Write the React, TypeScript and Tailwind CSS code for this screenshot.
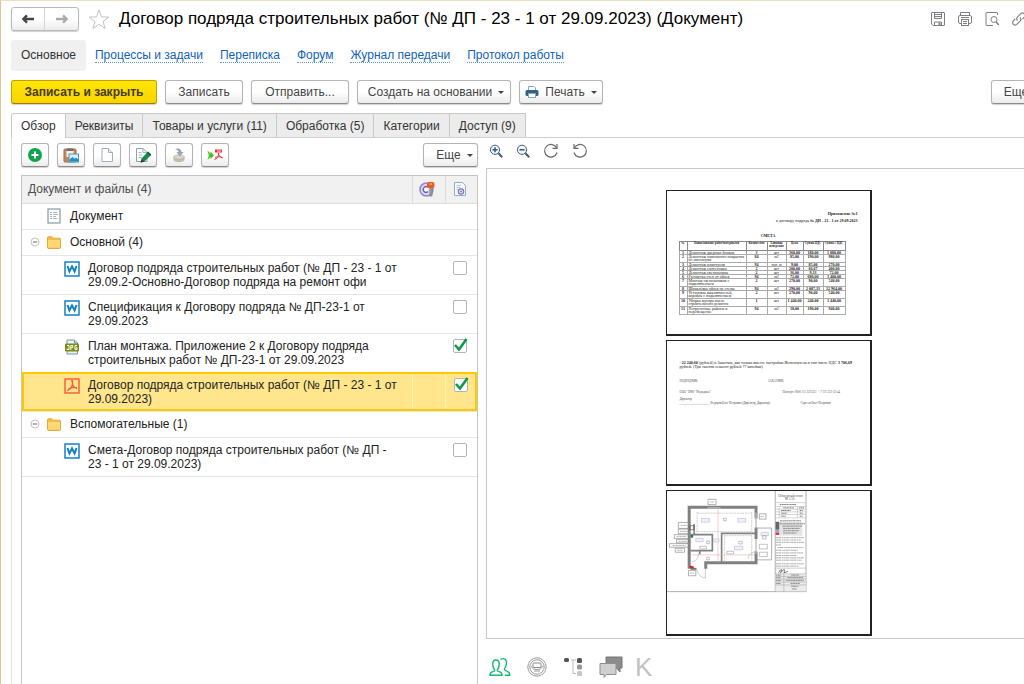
import type { ReactNode } from "react";
import clsx from "clsx";

const NAV_LINKS = ["Процессы и задачи", "Переписка", "Форум", "Журнал передачи", "Протокол работы"];

const TABS = ["Обзор", "Реквизиты", "Товары и услуги (11)", "Обработка (5)", "Категории", "Доступ (9)"];

type FileRow = {
  icon: "word" | "jpg" | "pdf";
  lines: [string, string];
  checked?: boolean;
  selected?: boolean;
};

const MAIN_FILES: FileRow[] = [
  {
    icon: "word",
    lines: ["Договор подряда строительных работ (№ ДП - 23 - 1 от", "29.09.2-Основно-Договор подряда на ремонт офи"],
  },
  { icon: "word", lines: ["Спецификация к Договору подряда № ДП-23-1 от", "29.09.2023"] },
  {
    icon: "jpg",
    lines: ["План монтажа. Приложение 2 к Договору подряда", "строительных работ № ДП-23-1 от 29.09.2023"],
    checked: true,
  },
  {
    icon: "pdf",
    lines: ["Договор подряда строительных работ (№ ДП - 23 - 1 от", "29.09.2023)"],
    checked: true,
    selected: true,
  },
];

const EXTRA_FILES: FileRow[] = [
  { icon: "word", lines: ["Смета-Договор подряда строительных работ (№ ДП -", "23 - 1 от 29.09.2023)"] },
];

type EstimateRow = { cells: string[]; tall?: boolean };

const ESTIMATE: EstimateRow[] = [
  { cells: ["1", "Демонтаж дверных блоков", "3", "шт", "360,00", "180,00", "1 080,00"] },
  { cells: ["2", "Демонтаж напольного покрытия из линолеума", "84", "м2", "85,00", "190,00", "980,00"], tall: true },
  { cells: ["3", "Демонтаж плинтусов", "94", "пог. м", "9,00", "85,00", "270,00"] },
  { cells: ["4", "Демонтаж сантехники", "2", "шт", "200,00", "66,67", "400,00"] },
  { cells: ["5", "Демонтаж светильника", "2", "шт", "36,00", "9,33", "72,00"] },
  { cells: ["6", "Расчистка стен от обоев", "94", "м2", "72,00", "680,00", "3 400,00"] },
  { cells: ["7", "Монтаж светильников с подключением", "2", "шт", "270,00", "90,00", "540,00"], tall: true },
  { cells: ["8", "Шпаклёвка обоев на стены", "94", "м2", "290,00", "2 087,33", "12 964,00"] },
  { cells: ["9", "Установка выключателей, коробок с подключением", "2", "шт", "270,00", "90,00", "540,00"], tall: true },
  { cells: ["10", "Уборка мусора после строительного ремонта", "1", "шт", "1 440,00", "240,00", "1 440,00"], tall: true },
  { cells: ["11", "Погрузочные работы и перемещение", "94", "м2", "18,00", "190,00", "940,00"], tall: true },
];

/* ---------- icons ---------- */

function ArrowIcon({ className }: { className?: string }) {
  return (
    <svg viewBox="0 0 14 10" className={clsx("h-[10px] w-[14px]", className)} fill="none" stroke="currentColor" strokeWidth="2.400">
      <path d="M13 5H3" />
      <path d="M6 1.400L2.400 5 6 8.600" />
    </svg>
  );
}

function WordIcon() {
  return (
    <svg viewBox="0 0 16 16" className="size-4">
      <rect x="1" y="1" width="14" height="14" fill="#fff" stroke="#1480c4" strokeWidth="1.500" />
      <path d="M3.500 5l1.900 5.500L8 5.500l2.600 5L12.500 5" fill="none" stroke="#1480c4" strokeWidth="2" />
    </svg>
  );
}

function PdfIcon() {
  return (
    <svg viewBox="0 0 16 16" className="size-4" fill="none" stroke="#f4593b">
      <rect x="1" y="1" width="14" height="14" strokeWidth="1.400" />
      <path d="M7 3h1.500v3.500c.5 2 2.200 3.500 4.500 4M8.500 6C8 9 6 11.500 3.200 12.800M4.200 11.300C6 9.800 9.500 9 12.800 9.700" strokeWidth="1.300" />
    </svg>
  );
}

function JpgIcon() {
  return (
    <svg viewBox="0 0 16 16" className="size-4">
      <path d="M3 1h7.500L13.500 4v11H3z" fill="#eaf1f4" stroke="#7795a5" />
      <path d="M10.500 1v3h3" fill="#c6d6de" stroke="#7795a5" />
      <rect x="1" y="4.500" width="14" height="8" rx="1" fill="#7d8c14" />
      <path d="M3 9.500v1h2V6.500H3M6.800 11V6.500h2v2.200h-2M13 6.500h-2v4h2V8.700h-1" fill="none" stroke="#fff" strokeWidth="1" />
    </svg>
  );
}

function FolderIcon() {
  return (
    <svg viewBox="0 0 14 13" className="h-[13px] w-[14px]">
      <path d="M.5 2c0-.8.300-1.200 1-1.200h3.500l1.300 1.400h6.200c.7 0 1 .4 1 1v8.300c0 .6-.4 1-1 1h-11c-.6 0-1-.4-1-1z" fill="#f3bd4c" stroke="#e5a93a" />
      <path d="M1 4h12v7.600H1z" fill="#ffd875" />
    </svg>
  );
}

function DocumentIcon() {
  return (
    <svg viewBox="0 0 14 16" className="h-4 w-[14px]" fill="none" stroke="#8fa1ac">
      <rect x="1" y="1" width="12" height="14" fill="#fff" strokeWidth="1.300" />
      <path d="M3 4.500h2M6 4.500h4M3 6.500h2M6 6.500h5M3 8.500h2M6 8.500h3M3 10.500h2M6 10.500h4" stroke="#a9b7c0" />
    </svg>
  );
}

function CollapseIcon() {
  return (
    <svg viewBox="0 0 10 10" className="size-[10px]" fill="none">
      <circle cx="5" cy="5" r="4" stroke="#c2c2c2" />
      <path d="M2.800 5h4.400" stroke="#666" />
    </svg>
  );
}

function AddIcon() {
  return (
    <svg viewBox="0 0 16 16" className="size-4">
      <circle cx="8" cy="8" r="7" fill="#10a54a" />
      <path d="M8 4.500v7M4.500 8h7" stroke="#fff" strokeWidth="2" />
    </svg>
  );
}

function PasteIcon() {
  return (
    <svg viewBox="0 0 16 16" className="size-4">
      <rect x="1" y="2" width="12" height="13" rx="1" fill="#c08a5f" stroke="#a26b42" />
      <rect x="3.500" y="4" width="7" height="6" fill="#f6efe8" />
      <path d="M4 1.500h6v2.500H4z" fill="#6d6d6d" />
      <rect x="6" y="7" width="9.500" height="8" fill="#d8effc" stroke="#4e93bd" />
      <path d="M6.500 14.500v-2l3-2.500 2 1.800 1.500-1 2.500 2v1.700z" fill="#1a8cc7" />
    </svg>
  );
}

function BlankPageIcon() {
  return (
    <svg viewBox="0 0 16 16" className="size-4" fill="#fff" stroke="#9fb0ba">
      <path d="M3 1.500h6.500L13.500 5.500v9H3z" />
      <path d="M9.500 1.500v4h4" fill="#e6edf1" />
    </svg>
  );
}

function EditPageIcon() {
  return (
    <svg viewBox="0 0 16 16" className="size-4">
      <path d="M1.500 1.500h6.500l4 4v9H1.500z" fill="#fff" stroke="#8a9fab" />
      <path d="M8 1.500v4h4M3.500 5.500h3M3.500 8h4M3.500 10.500h3" fill="none" stroke="#9fb5c1" />
      <path d="M6.500 11.500L12.500 5l3.300 3.200-6.300 6.300-3.800 1z" fill="#198a4b" />
      <path d="M12.500 5l3.300 3.200" stroke="#0d5233" strokeWidth="1.500" />
      <path d="M6.500 12.500l2.700 2.300-3.500.8z" fill="#333" />
    </svg>
  );
}

function StoreIcon() {
  return (
    <svg viewBox="0 0 16 16" className="size-4">
      <path d="M2.500 10v2.500c0 3.500 11 3.500 11 0V10z" fill="#c1bcac" />
      <ellipse cx="8" cy="10" rx="5.500" ry="2.200" fill="#d9d5c8" stroke="#b3ae9d" strokeWidth=".6" />
      <path d="M4 2.500C7 .5 10.500 1.500 10.500 5h2L8.800 9.500 5.500 5h2C7.500 3.500 6 2.500 4 2.500z" fill="#98a6b3" />
    </svg>
  );
}

function ToPdfIcon() {
  return (
    <svg viewBox="0 0 16 16" className="size-4">
      <path d="M.5 3.500l3 3V4.500l3.500 4-3.500 3.500V10l-3 3 1.300-4.500z" fill="#4fbf1f" />
      <path d="M8 2.500h7v3H8z" fill="#ee3338" />
      <path d="M10 4h4" stroke="#fff" strokeWidth=".8" />
      <path d="M11.300 6c.5 2.500 2 4.500 4.200 5M11.800 6.500c-.3 3-1.800 5.500-4.300 6M8 11c2-1.500 5-1.700 7.500-.5" fill="none" stroke="#ee3338" />
    </svg>
  );
}

function PrinterColorIcon() {
  return (
    <svg viewBox="0 0 14 14" className="size-[14px]">
      <path d="M3.500 1.500h5.500l1.500 1.500v3h-7z" fill="#fff" stroke="#8aa5b5" />
      <rect x=".5" y="5" width="13" height="6" rx="1.500" fill="#2f6488" />
      <rect x="3.500" y="8.500" width="7" height="4" fill="#fff" stroke="#8aa5b5" />
    </svg>
  );
}

function SaveIcon() {
  return (
    <svg viewBox="0 0 16 16" className="size-4" fill="none" stroke="#808080">
      <path d="M2 1.500h12q.5 0 .5.500v12q0 .5-.5.500H3L1.500 13V2q0-.5.5-.5z" />
      <path d="M4.500 1.500v6h7v-6M5 3.500h6M5 5.500h6M4.500 14.500V11h7v3.500" />
      <path d="M9.500 11.500v3" strokeWidth="2" />
    </svg>
  );
}

function PrinterIcon() {
  return (
    <svg viewBox="0 0 16 16" className="size-4" fill="none" stroke="#808080">
      <path d="M3.500 4.500v-3h9v3" />
      <rect x="1.500" y="4.500" width="13" height="8" rx="1.500" />
      <path d="M4 6.500h8" />
      <rect x="4.500" y="8.500" width="7" height="6" fill="#fff" />
      <path d="M6 10.500h4M6 12.500h4" />
    </svg>
  );
}

function PreviewIcon() {
  return (
    <svg viewBox="0 0 16 16" className="size-4" fill="none" stroke="#808080">
      <path d="M13.500 4V2q0-.5-.5-.5H2.500q-.5 0-.5.500v12q0 .5.500.5H9" />
      <circle cx="10" cy="8.500" r="3" />
      <path d="M12 10.800l2.800 3.200" strokeWidth="1.500" />
    </svg>
  );
}

function LinkIcon() {
  return (
    <svg viewBox="0 0 16 16" className="size-4" fill="none" stroke="#808080" strokeWidth="1.200">
      <path d="M6.500 9.500C5.200 8 5.600 6.800 6.600 5.800l3-3c1.100-1.100 2.600-1.100 3.600-.1s1 2.500-.1 3.600L11.500 8" />
      <path d="M9 6.500c1.300 1.400 1 2.700 0 3.700l-3 3c-1.100 1.100-2.600 1.100-3.600.1s-1-2.500.1-3.600L4.200 8" />
    </svg>
  );
}

function ZoomIcon({ plus }: { plus?: boolean }) {
  return (
    <svg viewBox="0 0 14 14" className="size-[14px]" fill="none" stroke="#4d5a63">
      <circle cx="6" cy="5.800" r="4.600" fill="#eef6fc" />
      <path d={plus ? "M6 3.300v5M3.500 5.800h5" : "M3.500 5.800h5"} stroke="#1f5e8f" strokeWidth="1.500" />
      <path d="M9.400 9.300l3.800 4" strokeWidth="2" />
    </svg>
  );
}

function RotateIcon({ left }: { left?: boolean }) {
  return (
    <svg viewBox="0 0 16 16" className={clsx("size-4", left && "-scale-x-100")} fill="none" stroke="#6a6a6a" strokeWidth="1.200">
      <path d="M13.600 5A6.300 6.300 0 1 0 14 9.500" />
      <path d="M14 1v4.400H9.500" />
    </svg>
  );
}

function SignatureIcon() {
  return (
    <svg viewBox="0 0 16 16" className="size-4" fill="none">
      <circle cx="7.500" cy="8.500" r="6.500" fill="#dedbf2" stroke="#8f87c9" strokeWidth="1.500" />
      <path d="M9 6.500a2.800 2.800 0 1 0 0 4" fill="#fff" stroke="#6a62b0" strokeWidth="1.300" />
      <path d="M10.800 5.500h2.400v9l-1.200 1-1.200-1z" fill="#9a9a9a" stroke="#777" strokeWidth=".6" />
      <rect x="8" y="1" width="7.500" height="6" rx="2" fill="#f4591c" />
      <path d="M10.500 3h2.500" stroke="#ffd2a8" />
    </svg>
  );
}

function DocSettingsIcon() {
  return (
    <svg viewBox="0 0 16 16" className="size-4" fill="none">
      <path d="M2.500 1.500h8l3 3v10h-11z" fill="#f5f9fb" stroke="#8fb0c2" />
      <path d="M4.500 4.500h4M4.500 6.500h4M4.500 8.500h2" stroke="#b4cad6" />
      <circle cx="9" cy="10.500" r="2.600" stroke="#7b73bd" strokeWidth="1.300" />
      <circle cx="9" cy="10.500" r="1" fill="#7b73bd" />
    </svg>
  );
}

function PeopleIcon() {
  return (
    <svg viewBox="0 0 22 20" className="h-5 w-[22px]" fill="none" stroke="#1bb673" strokeWidth="1.400">
      <path d="M1 18.200c0-2 .6-2.800 2.300-3.300 1.700-.5 2.600-.8 2.500-1.800C4.500 11.500 3.700 9.500 3.700 7.300 3.700 4.500 5 3 7 3s3.300 1.500 3.300 4.300c0 2.200-.8 4.200-2.100 5.800-.1 1 .8 1.300 2.500 1.800 1.700.5 2.300 1.300 2.300 3.300z" />
      <path d="M11.500 2.600C12.200 1.900 13 1.600 14 1.600c2.200 0 3.500 1.600 3.500 4.400 0 2.200-.9 4.300-2.100 5.900-.1 1.200.7 1.600 2.400 2.200 2.100.7 3 1.600 3 4.100h-5" />
    </svg>
  );
}

function StampIcon() {
  return (
    <svg viewBox="0 0 20 20" className="size-5" fill="none" stroke="#999">
      <circle cx="10" cy="10" r="9.200" />
      <circle cx="10" cy="10" r="7.200" />
      <rect x="6" y="6" width="8" height="4.500" rx="1" stroke="#888" />
      <path d="M4.500 9c.5 3 3 3.500 5.500 3.500s5-.5 5.500-3.500M7 14h6" />
    </svg>
  );
}

function TreeIcon() {
  return (
    <svg viewBox="0 0 20 20" className="size-5">
      <path d="M8 3h5M10 3v13.500h3" fill="none" stroke="#bbb" />
      <rect x="1" y="1" width="5" height="4" rx="1.500" fill="#555" />
      <rect x="14" y="1" width="5" height="5" rx="1.500" fill="#555" />
      <rect x="14" y="7.500" width="5" height="5" rx="1.500" fill="#999" />
      <rect x="14" y="14" width="5" height="5" rx="1.500" fill="#c6c6c6" />
    </svg>
  );
}

function ChatIcon() {
  return (
    <svg viewBox="0 0 24 22" className="h-[22px] w-6">
      <path d="M7 1h16v11h-2v4l-3.500-4H7z" fill="#8c8c8c" stroke="#777" />
      <path d="M1 7.500h16v11H7.500L5 21.500v-3H1z" fill="#cfcfcf" stroke="#8f8f8f" />
    </svg>
  );
}

const FILE_ICONS = { word: <WordIcon />, jpg: <JpgIcon />, pdf: <PdfIcon /> };

/* ---------- controls ---------- */

function Button({ children, className, label }: { children: ReactNode; className?: string; label?: string }) {
  return (
    <button
      type="button"
      aria-label={label}
      className={clsx(
        "flex h-6 shrink-0 items-center justify-center rounded-[3px] border border-[#b4b4b4] border-b-[#8c8c8c] bg-linear-to-b from-white from-50% to-[#ececec] whitespace-nowrap text-[#444] shadow-[0_1px_1px_#d0d0d0]",
        className,
      )}
    >
      {children}
    </button>
  );
}

function Caret() {
  return <span className="mt-px border-x-[3px] border-t-[3px] border-x-transparent border-t-[#444]" />;
}

function Check({ checked, label }: { checked?: boolean; label: string }) {
  return (
    <span className="relative block size-[14px]">
      <input
        type="checkbox"
        defaultChecked={checked}
        aria-label={label}
        className="peer block size-[14px] appearance-none rounded-[2px] border border-[#b3b3b3] bg-white"
      />
      <svg viewBox="0 0 14 14" className="pointer-events-none absolute inset-0 hidden overflow-visible peer-checked:block">
        <path d="M2 6l4 4.500L13.500 0" fill="none" stroke="#0b9a48" strokeWidth="2.600" />
      </svg>
    </span>
  );
}

function GroupRow({ title }: { title: string }) {
  return (
    <tr className="h-[26px] border-b border-[#e6e6e6]">
      <td className="p-0">
        <div className="flex items-center pl-2">
          <CollapseIcon />
          <span className="ml-[7px]">
            <FolderIcon />
          </span>
          <span className="ml-[9px]">{title}</span>
        </div>
      </td>
      <td />
      <td />
    </tr>
  );
}

function FileRowView({ file }: { file: FileRow }) {
  const cell = clsx("p-0 align-top", file.selected && "border-l border-[#fff1bd]");
  return (
    <tr
      className={clsx(
        "border-b border-[#e6e6e6]",
        file.selected && "bg-[#ffe68c] outline-2 -outline-offset-2 outline-[#fdc800]",
      )}
    >
      <td className="p-0">
        <div className="flex items-start py-[5px] pl-[42px] leading-[14px] whitespace-nowrap">
          {FILE_ICONS[file.icon]}
          <span className="ml-2">
            {file.lines[0]}
            <br />
            {file.lines[1]}
          </span>
        </div>
      </td>
      <td className={cell} />
      <td className={cell}>
        <div className="pt-[5px] pl-2">
          <Check checked={file.checked} label={file.lines.join(" ")} />
        </div>
      </td>
    </tr>
  );
}

function FilesTable() {
  return (
    <div className="ml-[9px] flex-1 border border-[#c4c4c4] border-b-0">
      <table className="w-full table-fixed border-collapse">
        <colgroup>
          <col />
          <col className="w-[33px]" />
          <col className="w-[32px]" />
        </colgroup>
        <thead className="bg-[#f1f1f1] text-[#4d4d4d]">
          <tr className="h-[27px] border-b border-[#dedede]">
            <th className="p-0 pl-[6px] text-left font-normal">Документ и файлы (4)</th>
            <th className="border-l border-[#dcdcdc] p-0 pl-[6px]">
              <SignatureIcon />
            </th>
            <th className="border-l border-[#dcdcdc] p-0 pl-[6px]">
              <DocSettingsIcon />
            </th>
          </tr>
        </thead>
        <tbody className="text-[#222]">
          <tr className="h-[26px] border-b border-[#e6e6e6]">
            <td className="p-0">
              <div className="flex items-center gap-[9px] pl-[25px]">
                <DocumentIcon />
                Документ
              </div>
            </td>
            <td />
            <td />
          </tr>
          <GroupRow title="Основной (4)" />
          {MAIN_FILES.map((file) => (
            <FileRowView key={file.lines.join()} file={file} />
          ))}
          <GroupRow title="Вспомогательные (1)" />
          {EXTRA_FILES.map((file) => (
            <FileRowView key={file.lines.join()} file={file} />
          ))}
        </tbody>
      </table>
    </div>
  );
}

/* ---------- preview sheets ---------- */

function Sheet({ children }: { children: ReactNode }) {
  return (
    <div className="h-[146px] w-[206px] overflow-hidden border border-r-2 border-b-2 border-[#222] bg-white font-['Liberation_Serif',serif] text-[4px] leading-[5px] text-[#222]">
      {children}
    </div>
  );
}

function EstimateSheet() {
  return (
    <Sheet>
      <div className="px-3 pt-5">
        <p className="text-right font-bold">Приложение №1</p>
        <p className="mt-[2px] text-right">
          к договору подряда <b>№ ДП - 23 - 1 от 29.09.2023</b>
        </p>
        <p className="mt-[10px] text-center font-bold">СМЕТА</p>
        <table className="mt-[3px] w-[167px] table-fixed border-collapse leading-[3px]">
          <colgroup>
            <col className="w-[8px]" />
            <col className="w-[59px]" />
            <col className="w-[21px]" />
            <col className="w-[19px]" />
            <col className="w-[17px]" />
            <col className="w-[20px]" />
            <col className="w-[22px]" />
          </colgroup>
          <thead className="text-[3px]">
            <tr className="h-[9px]">
              {["№", "Наименование работ/материалов", "Количество", "Единица измерения", "Цена", "Сумма НДС", "Сумма с НДС"].map((head) => (
                <th key={head} className="border border-[#888] p-0 align-top">
                  {head}
                </th>
              ))}
            </tr>
          </thead>
          <tbody>
            {ESTIMATE.map(({ cells, tall }) => (
              <tr key={cells[0]} className={tall ? "h-[8px]" : "h-[4px]"}>
                {cells.map((value, i) => (
                  <td
                    key={i}
                    className={clsx(
                      "border border-[#aaa] p-0 align-top",
                      i === 1 ? "pl-px" : "text-center",
                      i !== 1 && i !== 3 && "font-bold",
                    )}
                  >
                    {value}
                  </td>
                ))}
              </tr>
            ))}
          </tbody>
        </table>
      </div>
    </Sheet>
  );
}

function TermsSheet() {
  return (
    <Sheet>
      <div className="px-[13px] pt-5 leading-[4px]">
        <p>
          - <b>22 240,60</b> (рублей) и Заказчик, как только вместе настройки Исполнитель в том числе НДС <b>3 706,69</b> рублей. (Три тысячи семьсот рублей 77 копейки)
        </p>
        <div className="mt-[10px] grid grid-cols-2 text-[3px] text-[#555]">
          <p>ПОДРЯДЧИК:</p>
          <p>ЗАКАЗЧИК:</p>
        </div>
        <div className="mt-[7px] grid grid-cols-[103px_1fr] text-[3px] text-[#555]">
          <p>ООО "ПКФ "Меридиан"</p>
          <p>Паспорт: 0000 111 222333 / + 7 111 222-33-44</p>
        </div>
        <div className="mt-[3px] grid grid-cols-[121px_1fr] text-[3px] text-[#444]">
          <p>
            Директор
            <br />
            ____________________ Федоров Олег Петрович (Директор, Директор)
          </p>
          <p className="pt-1">Сергеев Олег Петрович</p>
        </div>
      </div>
    </Sheet>
  );
}

function PlanSheet() {
  return (
    <Sheet>
      <svg viewBox="21 15 612 432" className="block h-full w-full" preserveAspectRatio="xMinYMin meet" fill="none">
        <path d="M21 319H441V15M348 15V319" stroke="#888" strokeWidth="2" />
        {/* outer walls */}
        <path d="M88 250V64H290V98M290 125V160M290 198V232H138V250" stroke="#808080" strokeWidth="9" />
        <path d="M92 250H110" stroke="#777" strokeWidth="6" />
        <path d="M143 66h40M290 80v48M290 160v45" stroke="#bbb" strokeWidth="4" />
        {/* inner walls */}
        <path d="M92 147H158V195H92M186 232V143H288M120 195v12M103 115v32" stroke="#808080" strokeWidth="5" />
        <path d="M292 127h45v96h-45M145 40h24v16h-24zM300 84h20v16h-20z" stroke="#888" strokeWidth="2" />
        <path d="M55 110h35v18H55zM55 130h35v14H55zM43 147h46v12H43zM50 161h40v11H50zM28 174h60v11H28zM46 188h28v12H46zM86 255h22v16H86z" stroke="#888" strokeWidth="2" />
        <path d="M62 119h20M60 137h24M50 153h30M56 167h26M38 180h40M52 194h16M90 263h12M151 48h12M304 92h10" stroke="#aaa" strokeWidth="3" strokeDasharray="5 1 3 1" />
        <path d="M112 78v60M100 138h180M112 82h165M195 150v78M277 78v150M192 150h86" stroke="#bbb" strokeWidth="2" strokeDasharray="6 2" />
        <path d="M175 70v160M95 208h190" stroke="#efb4b4" strokeWidth="2" />
        <path d="M125 98h24v11h-24zM235 98h24v11h-24zM225 182h25v11h-25zM305 140h22v10h-22zM108 158h22v10h-22zM162 160h16v9h-16z" fill="#f0f1fa" stroke="#a9aace" strokeWidth="1.500" />
        <path d="M192 97h8v8h-8zM238 167h10v8h-10zM141 166h8v8h-8zM310 150h10v10h-10zM141 215h8v8h-8zM300 176h24v14h-24zM300 200h24v13h-24zM120 182h20v8h-20zM202 197h20v8h-20z" stroke="#888" strokeWidth="1.500" />
        <path d="M110 250c4 18 14 26 27 28V250M116 205c0 14-8 22-20 24M290 198c-16 2-22 10-24 22" stroke="#999" strokeWidth="1.500" />
        <path d="M90 240l12 3v5H90z" fill="#d22" />
        <path d="M92 148h8v8h-8z" fill="#2a7a45" />
        <path d="M90 120h12v12H90z" stroke="#555" strokeWidth="2" />
        {/* title block */}
        <text x="394" y="32" textAnchor="middle" fontSize="11" fill="#555">Обмерный план</text>
        <text x="392" y="43" textAnchor="middle" fontSize="10" fill="#555">М 1:50</text>
        <path d="M348 50h93M348 62h93M348 70h93M348 78h93M348 86h93M348 96h93M415 62v34M360 62v34" stroke="#aaa" strokeWidth="1.500" />
        <path d="M362 56h50M372 66h32M420 66h15M366 74h28M366 82h18M366 91h14M422 74h10M422 82h10M422 91h10" stroke="#777" strokeWidth="3" strokeDasharray="5 1 3 1" />
        <path d="M360 108h70v42h-70z" fill="#e4e4e4" />
        <path d="M362 105h65M362 114h76M370 121h60M372 128h50M372 135h48M372 142h40" stroke="#888" strokeWidth="3" strokeDasharray="7 1 4 1" />
        <path d="M349 108h11v24h-11z" fill="#666" />
        <path d="M349 133h11v6h-11z" fill="#99a4dc" />
        <path d="M349 140h11v8h-11z" fill="#d63a3a" />
        <path d="M350 156h84M350 163h75M350 170h86M350 178h18M355 186h78M350 194h66M350 202h82M350 210h64M350 217h84M350 224h78M350 235h84M350 242h70" stroke="#aaa" strokeWidth="3" strokeDasharray="6 1 9 2 4 1" />
        <path d="M358 262c8-14 12-12 6 0 10-12 16-14 10 0l12-4" stroke="#333" strokeWidth="2" />
        <path d="M349 266h91v52h-91z" fill="#ececec" />
        <path d="M348 248h93M348 265h93M348 273h93M348 281h93M348 290h93M348 299h93M374 265v54" stroke="#999" strokeWidth="1.500" />
        <path d="M350 269h16M350 277h14M350 285h16M350 294h14M396 269h24M384 277h48M380 285h54M394 294h28M396 303h22M398 311h14" stroke="#888" strokeWidth="3" strokeDasharray="5 1 8 1" />
      </svg>
    </Sheet>
  );
}

/* ---------- page ---------- */

function Header() {
  return (
    <header className="flex items-center pt-[6px]">
      <div className="flex h-6 shrink-0 overflow-hidden rounded-[3px] border border-[#b9b9b9] bg-linear-to-b from-white from-50% to-[#ececec] shadow-[0_1px_1px_#d0d0d0]">
        <button type="button" aria-label="Назад" className="flex w-[33px] items-center justify-center border-r border-[#d4d4d4] text-[#444]">
          <ArrowIcon />
        </button>
        <button type="button" aria-label="Вперед" className="flex w-[33px] items-center justify-center text-[#aaa]">
          <ArrowIcon className="rotate-180" />
        </button>
      </div>
      <button type="button" aria-label="В избранное" className="ml-[9px]">
        <svg viewBox="0 0 22 20" className="h-5 w-[22px]" fill="#fff" stroke="#c2c2c2">
          <path d="M11 1l2.500 6.900 7.400.200-5.900 4.400 2.100 7L11 15.400l-6.100 4.100 2.100-7L1.100 8.100l7.400-.2z" />
        </svg>
      </button>
      <h1 className="ml-[9px] text-[17px] leading-6 whitespace-nowrap text-black">
        Договор подряда строительных работ (№ ДП - 23 - 1 от 29.09.2023) (Документ)
      </h1>
      <div className="mr-[33px] ml-auto flex gap-[11px]">
        <button type="button" aria-label="Сохранить"><SaveIcon /></button>
        <button type="button" aria-label="Печать"><PrinterIcon /></button>
        <button type="button" aria-label="Просмотр"><PreviewIcon /></button>
        <button type="button" aria-label="Получить ссылку"><LinkIcon /></button>
      </div>
    </header>
  );
}

export default function App() {
  return (
    <div className="flex min-h-screen overflow-hidden border-t border-l border-t-[#ebe0bf] border-l-[#d9c690] bg-white font-['Liberation_Sans',Arial,sans-serif] text-[12px] leading-4">
      {/* the form is wider than the window and runs past its right edge */}
      <div className="-mr-[36px] flex min-w-0 flex-1 flex-col pl-[10px]">
        <Header />

        <nav className="mt-2 flex h-8 items-center gap-[17px]">
          <span className="-mr-2 flex h-[31px] items-center rounded-[3px] bg-[#f0f0f0] px-[10px] text-[#333]">Основное</span>
          {NAV_LINKS.map((link) => (
            <a key={link} href="#" className="border-b border-dotted border-[#5d97cc] leading-[14px] whitespace-nowrap text-[#0f62b8]">
              {link}
            </a>
          ))}
        </nav>

        <div className="mt-[9px] flex gap-2">
          <button
            type="button"
            className="h-6 w-[146px] shrink-0 rounded-[3px] border border-[#c2a000] border-b-[#9a7f00] bg-linear-to-b from-[#ffe600] to-[#fad400] font-bold whitespace-nowrap text-[#443c20] shadow-[0_1px_1px_#d0d0d0]"
          >
            Записать и закрыть
          </button>
          <Button className="w-[78px]">Записать</Button>
          <Button className="w-[98px]">Отправить...</Button>
          <Button className="w-[154px] gap-[6px] pl-1">
            Создать на основании
            <Caret />
          </Button>
          <Button className="w-[84px] gap-[6px]">
            <PrinterColorIcon />
            Печать
            <Caret />
          </Button>
          <Button className="mr-[15px] ml-auto w-[54px] gap-[6px] pl-2">
            Еще
            <Caret />
          </Button>
        </div>

        <div role="tablist" className="mt-[9px] flex border-b border-[#cfcfcf]">
          {TABS.map((tab, i) => (
            <button
              key={tab}
              type="button"
              role="tab"
              aria-selected={i === 0}
              className={clsx(
                "h-6 border-t border-r border-[#c8c8c8] px-[9px] whitespace-nowrap text-[#333]",
                i === 0 ? "-mb-px h-[25px] rounded-tl-[3px] border-l bg-white" : "bg-[#ececec]",
              )}
            >
              {tab}
            </button>
          ))}
        </div>

        <main className="flex flex-1">
          <section className="flex w-[467px] shrink-0 flex-col border-l border-[#e2e2e2]">
            <div className="mb-2 flex gap-2 pt-[5px] pl-[9px]">
              <Button label="Добавить" className="w-7"><AddIcon /></Button>
              <Button label="Вставить" className="w-7"><PasteIcon /></Button>
              <Button label="Создать" className="w-7"><BlankPageIcon /></Button>
              <Button label="Изменить" className="w-7"><EditPageIcon /></Button>
              <Button label="Поместить в хранилище" className="w-7"><StoreIcon /></Button>
              <Button label="Преобразовать в PDF" className="w-7"><ToPdfIcon /></Button>
              <Button className="ml-auto w-[55px] gap-[6px] pl-2">
                Еще
                <Caret />
              </Button>
            </div>
            <FilesTable />
          </section>

          <section className="ml-2 flex min-w-0 flex-1 flex-col">
            <div className="flex h-[30px] items-center gap-[13px] pb-1 pl-[3px]">
              <button type="button" aria-label="Увеличить"><ZoomIcon plus /></button>
              <button type="button" aria-label="Уменьшить"><ZoomIcon /></button>
              <button type="button" aria-label="Повернуть вправо"><RotateIcon /></button>
              <button type="button" aria-label="Повернуть влево"><RotateIcon left /></button>
            </div>
            <div className="mr-[9px] flex flex-col items-center gap-1 border border-[#c8c8c8] pt-[21px] pb-[2px]">
              <EstimateSheet />
              <TermsSheet />
              <PlanSheet />
            </div>
            <div className="mt-4 flex items-center gap-4 pl-[3px]">
              <button type="button" aria-label="Участники"><PeopleIcon /></button>
              <button type="button" aria-label="Печать организации"><StampIcon /></button>
              <button type="button" aria-label="Структура"><TreeIcon /></button>
              <button type="button" aria-label="Обсуждение"><ChatIcon /></button>
              <button type="button" className="-ml-1 text-[26px] leading-6 text-[#c2c2c2]">K</button>
            </div>
          </section>
        </main>
      </div>
    </div>
  );
}
